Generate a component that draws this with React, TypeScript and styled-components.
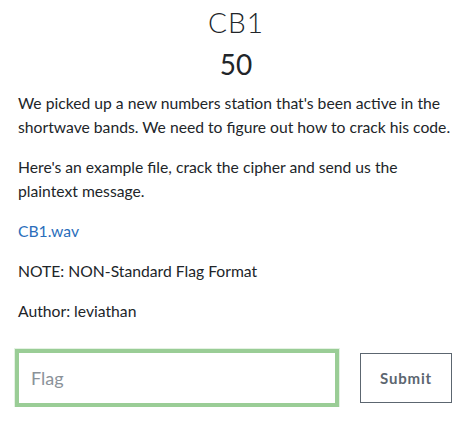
import React from "react";
import styled, { createGlobalStyle } from "styled-components";

const Global = createGlobalStyle`
  html, body { margin: 0; padding: 0; background: #fff; }
  body { font-family: Lato, "Noto Sans", sans-serif; color: #212529; }
`;

const Page = styled.div`
  width: 470px;
  padding: 0 16px 0 18px;
  box-sizing: border-box;
`;

const Title = styled.h2`
  margin: 0;
  padding-top: 5px;
  text-align: center;
  font-family: Lato, sans-serif;
  font-weight: 300;
  font-size: 28px;
  line-height: 34px;
  letter-spacing: 1px;
  color: #212529;
`;

const Value = styled.h3`
  margin: 8px 0 10px;
  text-align: center;
  font-family: Lato, sans-serif;
  font-weight: 400;
  font-size: 28px;
  line-height: 34px;
  color: #212529;
`;

const Desc = styled.div`
  font-size: 15.7px;
  line-height: 24px;
`;

const P = styled.p`
  margin: 0 0 16px;
`;

const Link = styled.a`
  color: #2a6ebb;
  text-decoration: none;
`;

const Form = styled.form`
  display: flex;
  align-items: center;
  justify-content: space-between;
  margin-top: 26px;
  margin-left: -3px;
  margin-right: 2px;
`;

const FlagInput = styled.input`
  width: 324px;
  height: 58px;
  box-sizing: border-box;
  border: 4px solid #9acd96;
  box-shadow: 0 0 0 1px #e4f2e3;
  outline: none;
  padding: 0 12px;
  font-family: Lato, sans-serif;
  font-size: 18px;
  color: #212529;
  &::placeholder { color: #8a9299; }
`;

const SubmitButton = styled.button`
  width: 92px;
  height: 50px;
  box-sizing: border-box;
  background: #fff;
  border: 1px solid #5c6670;
  color: #5c6670;
  font-family: Lato, sans-serif;
  font-weight: 700;
  font-size: 15px;
  letter-spacing: 0.8px;
  cursor: pointer;
`;

export default function App() {
  return (
    <Page>
      <Global />
      <Title>CB1</Title>
      <Value>50</Value>
      <Desc>
        <P>
          We picked up a new numbers station that's been active in the shortwave bands. We need to figure out how to crack his code.
        </P>
        <P>Here's an example file, crack the cipher and send us the plaintext message.</P>
        <P>
          <Link href="#">CB1.wav</Link>
        </P>
        <P>NOTE: NON-Standard Flag Format</P>
        <P>Author: leviathan</P>
      </Desc>
      <Form onSubmit={(e) => e.preventDefault()}>
        <FlagInput placeholder="Flag" autoFocus />
        <SubmitButton type="submit">Submit</SubmitButton>
      </Form>
    </Page>
  );
}
